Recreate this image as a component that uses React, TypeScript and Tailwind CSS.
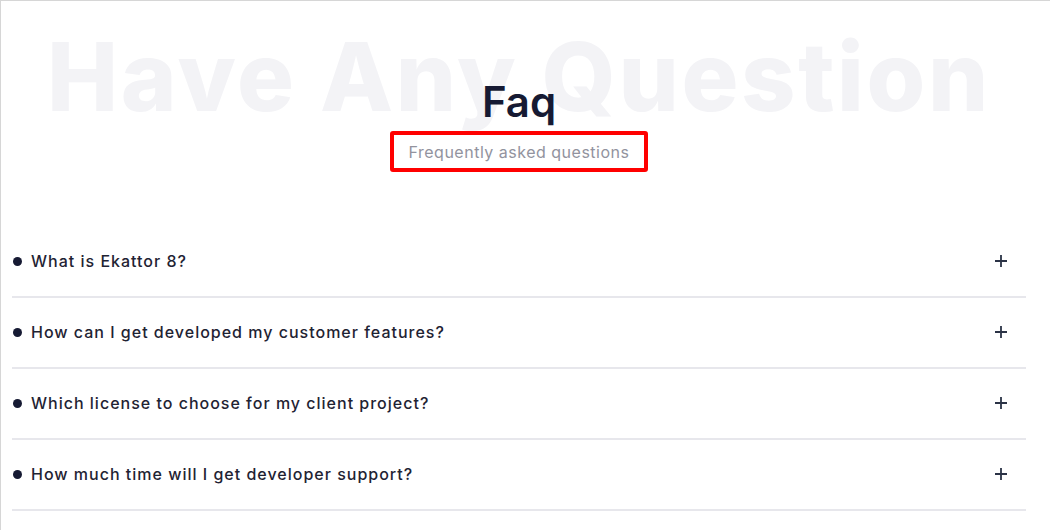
import React from "react";

const questions = [
  "What is Ekattor 8?",
  "How can I get developed my customer features?",
  "Which license to choose for my client project?",
  "How much time will I get developer support?",
];

function Plus() {
  return (
    <svg width="14" height="14" viewBox="0 0 14 14" fill="none">
      <path d="M7 1v12M1 7h12" stroke="#2b3346" strokeWidth="1.8" strokeLinecap="butt" />
    </svg>
  );
}

export default function App() {
  return (
    <div
      className="w-[1050px] h-[530px] overflow-hidden bg-white border-l border-t border-[#d6d6d6]"
      style={{ fontFamily: "Inter, 'Open Sans', sans-serif" }}
    >
      <div className="ml-[11px] w-[1014px]">
        <div className="relative h-[226px]">
          <div className="absolute left-[-20px] right-[-20px] top-[28px] flex justify-center">
            <span className="text-[95px] leading-[95px] font-extrabold text-[#f3f3f6] tracking-[2.6px] whitespace-nowrap select-none">
              Have Any Question
            </span>
          </div>
          <div className="relative flex flex-col items-center pt-[78px]">
            <h1 className="text-[42px] leading-[46px] font-semibold text-[#161a33]">Faq</h1>
            <div className="mt-[6px] border-4 border-[#ff0000] rounded-[3px] px-[15px] h-[41px] flex items-center">
              <p className="text-[16px] text-[#92939e] tracking-[0.5px]">Frequently asked questions</p>
            </div>
          </div>
        </div>
        {questions.map((q) => (
          <div
            key={q}
            className="h-[71px] flex items-center justify-between border-b-2 border-[#e7e7ec] pb-[1px]"
          >
            <div className="flex items-center">
              <span className="w-[9px] h-[9px] rounded-full bg-[#161a33] ml-[1px] mr-[9px]" />
              <span className="text-[16px] font-medium text-[#1f2333] tracking-[1px]">{q}</span>
            </div>
            <div className="mr-[18px] flex items-center">
              <Plus />
            </div>
          </div>
        ))}
      </div>
    </div>
  );
}
